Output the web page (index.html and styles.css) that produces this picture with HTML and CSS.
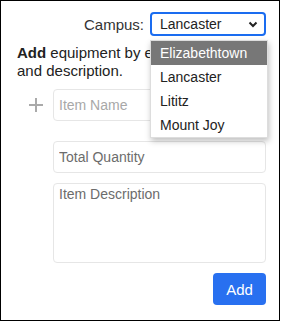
FILE: index.html
```html
<!DOCTYPE html>
<html lang="en">
<head>
    <meta charset="UTF-8">
    <meta name="viewport" content="width=device-width, initial-scale=1.0">
    <title>Add Equipment</title>
    <link rel="stylesheet" href="styles.css">
</head>
<body>
    <div class="frame">
        <div class="campus-row">
            <label class="campus-label">Campus:</label>
            <div class="campus-select">
                <div class="select-box">
                    <span>Lancaster</span>
                    <svg width="10" height="7" viewBox="0 0 10 7"><path d="M1.5 1.5 L5 5 L8.5 1.5" fill="none" stroke="#222" stroke-width="2"/></svg>
                </div>
                <ul class="select-list">
                    <li class="active">Elizabethtown</li>
                    <li>Lancaster</li>
                    <li>Lititz</li>
                    <li>Mount Joy</li>
                </ul>
            </div>
        </div>

        <p class="intro"><b>Add</b> equipment by entering a name<br>and description.</p>

        <div class="form">
            <div class="plus">
                <svg width="14" height="14" viewBox="0 0 14 14"><path d="M7 0 V14 M0 7 H14" stroke="#aaa" stroke-width="2"/></svg>
            </div>
            <input type="text" placeholder="Item Name" class="field name-field">
            <div></div>
            <input type="text" placeholder="Total Quantity" class="field">
            <div></div>
            <textarea placeholder="Item Description" class="field desc"></textarea>
            <div></div>
            <div class="actions">
                <button class="add-btn">Add</button>
            </div>
        </div>
    </div>
</body>
</html>
```
FILE: styles.css
```css
body {
    margin: 0;
    font-family: "Liberation Sans", Arial, sans-serif;
    color: #222;
    background: white;
}

.frame {
    box-sizing: border-box;
    width: 280px;
    height: 321px;
    border: 1px solid #000;
    padding: 11px 13px 0 16px;
}

.campus-row {
    display: flex;
    justify-content: flex-end;
    align-items: center;
    gap: 6px;
    height: 24px;
}

.campus-label {
    font-size: 15px;
    color: #333;
}

.campus-select {
    position: relative;
    width: 116px;
}

.select-box {
    box-sizing: border-box;
    height: 24px;
    border: 2px solid #1a6cf0;
    border-radius: 4px;
    display: flex;
    align-items: center;
    justify-content: space-between;
    padding: 0 6px 0 8px;
    font-size: 14px;
    color: #222;
}

.select-list {
    position: absolute;
    top: 28px;
    left: 0;
    width: 116px;
    margin: 0;
    padding: 0;
    list-style: none;
    background: white;
    border: 1px solid #ddd;
    box-shadow: 1px 3px 6px rgba(0, 0, 0, 0.25);
    z-index: 2;
}

.select-list li {
    height: 24px;
    line-height: 24px;
    padding-left: 9px;
    font-size: 14px;
    color: #222;
}

.select-list li.active {
    background: #777;
    color: white;
}

.intro {
    margin: 8px 0 0;
    font-size: 15px;
    line-height: 18px;
    color: #222;
    white-space: nowrap;
}

.form {
    display: grid;
    grid-template-columns: 36px 1fr;
    row-gap: 20px;
    margin-top: 9px;
    align-items: center;
}

.plus {
    display: flex;
    justify-content: center;
    padding-left: 2px;
}

.field {
    box-sizing: border-box;
    width: 100%;
    height: 32px;
    border: 1px solid #e6e6e6;
    border-radius: 4px;
    padding: 0 5px;
    font-family: "Liberation Sans", Arial, sans-serif;
    font-size: 14px;
    color: #222;
    outline: none;
}

.field::placeholder {
    color: #6c6c6c;
}

.name-field::placeholder {
    color: #a8a8a8;
}

.desc {
    height: 80px;
    resize: none;
    padding-top: 2px;
    margin-top: -10px;
    display: block;
}

.actions {
    display: flex;
    justify-content: flex-end;
    margin-top: -10px;
}

.add-btn {
    width: 53px;
    height: 32px;
    border: none;
    border-radius: 4px;
    background: #2870f0;
    color: white;
    font-family: "Liberation Sans", Arial, sans-serif;
    font-size: 15px;
}
```
